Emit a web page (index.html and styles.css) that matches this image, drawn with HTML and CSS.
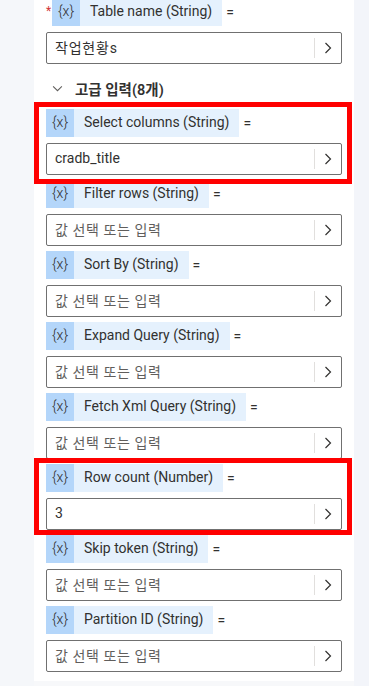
FILE: index.html
```html
<!DOCTYPE html>
<html lang="ko">
<head>
<meta charset="utf-8">
<link rel="stylesheet" href="styles.css">
</head>
<body>
<div class="page">
  <div class="gutter"></div>
  <div class="card">
    <div class="field field-first">
      <div class="label-row required">
        <span class="asterisk">*</span>
        <span class="token"><span class="token-icon">{x}</span><span class="token-text">Table name (String)</span></span>
        <span class="eq">=</span>
      </div>
      <div class="input"><span class="value ko">작업현황s</span><span class="divider"></span><svg class="chev" viewBox="0 0 8 12" width="8" height="12"><path d="M1.5 1 L6.5 6 L1.5 11" fill="none" stroke="#323130" stroke-width="1.2"/></svg></div>
    </div>

    <div class="section-head">
      <svg class="chev-down" viewBox="0 0 12 8" width="11" height="7"><path d="M1 1.5 L6 6.5 L11 1.5" fill="none" stroke="#605e5c" stroke-width="1.2"/></svg>
      <span>고급 입력(8개)</span>
    </div>

    <div class="fields">
      <div class="field">
        <div class="label-row"><span class="token"><span class="token-icon">{x}</span><span class="token-text">Select columns (String)</span></span><span class="eq">=</span></div>
        <div class="input"><span class="value">cradb_title</span><span class="divider"></span><svg class="chev" viewBox="0 0 8 12" width="8" height="12"><path d="M1.5 1 L6.5 6 L1.5 11" fill="none" stroke="#323130" stroke-width="1.2"/></svg></div>
        <div class="highlight highlight-a"></div>
      </div>
      <div class="field">
        <div class="label-row"><span class="token"><span class="token-icon">{x}</span><span class="token-text">Filter rows (String)</span></span><span class="eq">=</span></div>
        <div class="input"><span class="placeholder">값 선택 또는 입력</span><span class="divider"></span><svg class="chev" viewBox="0 0 8 12" width="8" height="12"><path d="M1.5 1 L6.5 6 L1.5 11" fill="none" stroke="#323130" stroke-width="1.2"/></svg></div>
      </div>
      <div class="field">
        <div class="label-row"><span class="token"><span class="token-icon">{x}</span><span class="token-text">Sort By (String)</span></span><span class="eq">=</span></div>
        <div class="input"><span class="placeholder">값 선택 또는 입력</span><span class="divider"></span><svg class="chev" viewBox="0 0 8 12" width="8" height="12"><path d="M1.5 1 L6.5 6 L1.5 11" fill="none" stroke="#323130" stroke-width="1.2"/></svg></div>
      </div>
      <div class="field">
        <div class="label-row"><span class="token"><span class="token-icon">{x}</span><span class="token-text">Expand Query (String)</span></span><span class="eq">=</span></div>
        <div class="input"><span class="placeholder">값 선택 또는 입력</span><span class="divider"></span><svg class="chev" viewBox="0 0 8 12" width="8" height="12"><path d="M1.5 1 L6.5 6 L1.5 11" fill="none" stroke="#323130" stroke-width="1.2"/></svg></div>
      </div>
      <div class="field">
        <div class="label-row"><span class="token"><span class="token-icon">{x}</span><span class="token-text">Fetch Xml Query (String)</span></span><span class="eq">=</span></div>
        <div class="input"><span class="placeholder">값 선택 또는 입력</span><span class="divider"></span><svg class="chev" viewBox="0 0 8 12" width="8" height="12"><path d="M1.5 1 L6.5 6 L1.5 11" fill="none" stroke="#323130" stroke-width="1.2"/></svg></div>
      </div>
      <div class="field">
        <div class="label-row"><span class="token"><span class="token-icon">{x}</span><span class="token-text">Row count (Number)</span></span><span class="eq">=</span></div>
        <div class="input"><span class="value">3</span><span class="divider"></span><svg class="chev" viewBox="0 0 8 12" width="8" height="12"><path d="M1.5 1 L6.5 6 L1.5 11" fill="none" stroke="#323130" stroke-width="1.2"/></svg></div>
        <div class="highlight highlight-b"></div>
      </div>
      <div class="field">
        <div class="label-row"><span class="token"><span class="token-icon">{x}</span><span class="token-text">Skip token (String)</span></span><span class="eq">=</span></div>
        <div class="input"><span class="placeholder">값 선택 또는 입력</span><span class="divider"></span><svg class="chev" viewBox="0 0 8 12" width="8" height="12"><path d="M1.5 1 L6.5 6 L1.5 11" fill="none" stroke="#323130" stroke-width="1.2"/></svg></div>
      </div>
      <div class="field">
        <div class="label-row"><span class="token"><span class="token-icon">{x}</span><span class="token-text">Partition ID (String)</span></span><span class="eq">=</span></div>
        <div class="input"><span class="placeholder">값 선택 또는 입력</span><span class="divider"></span><svg class="chev" viewBox="0 0 8 12" width="8" height="12"><path d="M1.5 1 L6.5 6 L1.5 11" fill="none" stroke="#323130" stroke-width="1.2"/></svg></div>
      </div>
    </div>
  </div>
  <div class="right-strip"></div>
</div>
</body>
</html>
```

FILE: styles.css
```css
* { box-sizing: border-box; }
html, body {
  margin: 0;
  padding: 0;
  width: 369px;
  height: 686px;
  overflow: hidden;
  background: #f7f8fa;
  font-family: Roboto, "Noto Sans CJK KR", sans-serif;
  color: #323130;
}
.page {
  display: flex;
  align-items: flex-start;
  height: 686px;
}
.gutter {
  width: 34px;
  flex: none;
  align-self: stretch;
  background: #f5f7fa;
}
.card {
  width: 320px;
  flex: none;
  background: #ffffff;
  padding: 0 12px 9px 12px;
}
.right-strip {
  flex: 1;
  align-self: stretch;
  background: #f3f5fa;
}
.field {
  position: relative;
  display: flex;
  flex-direction: column;
  gap: 6px;
}
.field-first {
  margin-top: -2px;
}
.fields {
  display: flex;
  flex-direction: column;
  gap: 5px;
}
.label-row {
  display: flex;
  align-items: center;
  height: 28px;
}
.asterisk {
  color: #d13438;
  font-size: 12px;
  width: 6px;
  margin-top: -2px;
  line-height: 1;
}
.token {
  display: inline-flex;
  height: 28px;
  background: #e5f1fd;
}
.token-icon {
  width: 28px;
  display: flex;
  align-items: center;
  justify-content: center;
  background: #b4d6fa;
  font-size: 14px;
  font-weight: 300;
  padding-bottom: 3px;
}
.token-text {
  display: flex;
  align-items: center;
  padding: 0 10px;
  font-size: 14px;
  padding-bottom: 2px;
}
.eq {
  margin-left: 4px;
  font-size: 14px;
}
.input {
  height: 32px;
  width: 296px;
  border: 1px solid #707070;
  border-radius: 2px;
  display: flex;
  align-items: center;
  padding-left: 8px;
}
.value, .placeholder {
  flex: 1;
  font-size: 14px;
  padding-bottom: 2px;
}
.placeholder {
  color: #605e5c;
  letter-spacing: 0.6px;
}
.ko {
  letter-spacing: 0.8px;
}
.divider {
  width: 1px;
  height: 20px;
  background: #e1dfdd;
}
.chev {
  margin: 0 9px 0 9px;
}
.section-head {
  height: 28px;
  margin: 10px 0 7px 0;
  display: flex;
  align-items: center;
  padding-left: 6px;
  font-size: 14.5px;
  font-weight: 600;
  color: #323130;
}
.chev-down {
  margin-right: 12px;
}
.highlight {
  position: absolute;
  border: 5px solid #ff0000;
  pointer-events: none;
  z-index: 2;
}
.highlight-a {
  top: -7px;
  left: -12px;
  right: -10px;
  bottom: -9px;
}
.highlight-b {
  top: -6px;
  left: -12px;
  right: -10px;
  bottom: -5px;
}
```
